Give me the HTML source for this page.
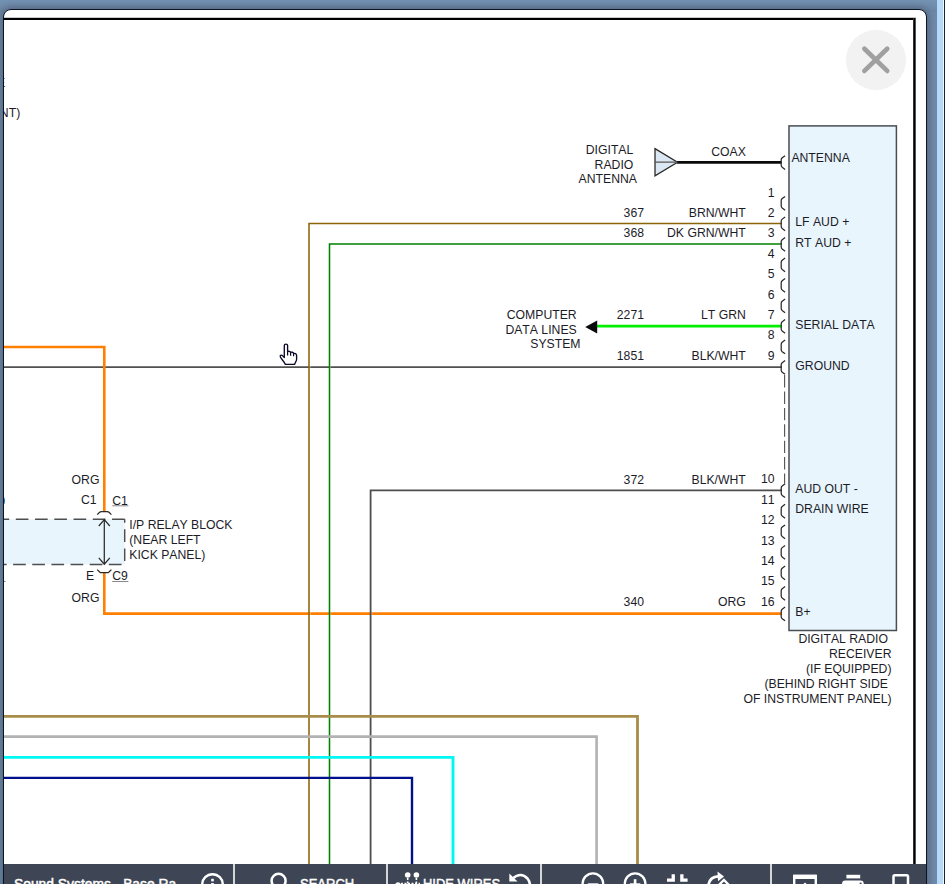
<!DOCTYPE html>
<html><head><meta charset="utf-8"><title>Wiring Diagram</title>
<style>
html,body{margin:0;padding:0;}
body{width:945px;height:884px;overflow:hidden;position:relative;background:#6f8ba9;font-family:"Liberation Sans",sans-serif;}
#bgtop{position:absolute;left:0;top:0;width:945px;height:12px;background:linear-gradient(#7493b4,#6b87a5);}
#panel{position:absolute;left:3px;top:9px;width:922px;height:900px;background:#fff;border:1px solid #0c1420;border-radius:8px 8px 0 0;box-shadow:0 0 7px 2px rgba(72,86,108,.7);}
#rstripe{position:absolute;left:937px;top:0;width:8px;height:884px;background:linear-gradient(90deg,#b1d9fd 0,#b9d8f5 3px,#aed8fb 6px,#eef7fe 6px,#eef7fe 7px,#1a2432 7px);}
#ftop{position:absolute;left:4px;top:17px;width:911.6px;height:3px;background:linear-gradient(#c8c8c8 0,#c8c8c8 1px,#000 1px);}
#fright{position:absolute;left:913px;top:18px;width:3px;height:846px;background:linear-gradient(90deg,#333 0,#333 1px,#000 1px,#000 2px,#555 2px);}
#dg{position:absolute;left:0;top:0;}
#close{position:absolute;left:846px;top:30px;width:60px;height:60px;border-radius:50%;background:#f2f2f2;}
#tb{position:absolute;left:4px;top:864px;width:922px;height:42px;background:#3e4656;color:#fff;}
.dv{position:absolute;top:0;width:2px;height:42px;background:#d3d8d6;}
.tt{position:absolute;white-space:nowrap;font-weight:normal;color:#fff;line-height:1;font-size:14px;transform-origin:0 0;-webkit-text-stroke:0.45px #fff;font-kerning:none;}
</style></head><body>
<div id="bgtop"></div>
<div id="panel"></div>
<div id="rstripe"></div>

<svg id="dg" width="945" height="884" viewBox="0 0 945 884">
<defs><clipPath id="cp"><rect x="4" y="20" width="909.3" height="844"/></clipPath></defs>
<g clip-path="url(#cp)" font-family="Liberation Sans, sans-serif" font-size="12.22" fill="#1c1c28" style="font-kerning:none">
<!-- component box -->
<rect x="789.0" y="125.9" width="107.4" height="504.6" fill="#e8f5fd" stroke="#484d52" stroke-width="1.5"/>
<!-- relay block -->
<rect x="-20" y="519.2" width="144.7" height="45.2" fill="#e8f5fd" stroke="none"/>
<path d="M124.7 519.2H-50" fill="none" stroke="#4e4e4e" stroke-width="1.45" stroke-dasharray="12.65 6.6"/>
<path d="M124.7 519.2V564.4H-50" fill="none" stroke="#4e4e4e" stroke-width="1.45" stroke-dasharray="12.7 6.45" stroke-dashoffset="9.1"/>
<!-- dashed link between pin9 and pin10 -->
<line x1="784.6" y1="375.1" x2="784.6" y2="483.4" stroke="#585858" stroke-width="1.15" stroke-dasharray="12.4 4"/>
<!-- vertical wires (below) -->
<g fill="none">
<path d="M104.3 572.8V613.6H782" stroke="#ff8000" stroke-width="2.6"/>
<path d="M0 367.1H782" stroke="#505050" stroke-width="1.7"/>
<path d="M0 347H104.3V511.4" stroke="#ff8000" stroke-width="2.6"/>
<path d="M310.15 365.9v2.4M330.55 365.9v2.4M310.2 612.0v3.2M330.6 612.0v3.2M371.8 612.0v3.2" stroke="#fff" stroke-width="0.4"/>
<path d="M782 223.5H309V890" stroke="#8b6508" stroke-width="1.55"/>
<path d="M782 244.0H329.5V890" stroke="#008000" stroke-width="1.55"/>
<path d="M782 490.4H370.6V890" stroke="#4e4e4e" stroke-width="1.8"/>
<path d="M0 716.3H637.5V890" stroke="#a88d4a" stroke-width="2.8"/>
<path d="M0 736.6H596.6V890" stroke="#b2b2b2" stroke-width="2.6"/>
<path d="M0 757.4H453V890" stroke="#00f8f4" stroke-width="2.9"/>
<path d="M0 777.9H412V890" stroke="#00108c" stroke-width="2.4"/>
<path d="M597 326.1H782" stroke="#00ee00" stroke-width="2.8"/>
<path d="M677 162.4H781.6" stroke="#0a0a0a" stroke-width="2.8"/>
</g>
<path d="M3.6 497.4Q5.4 500.6 3.8 504" fill="none" stroke="#2a7fd0" stroke-width="1.1"/><path d="M4 581.4H5.6" stroke="#888" stroke-width="1"/>
<!-- arrow -->
<path d="M585.2 326.9L597.2 320.4V333.4Z" fill="#0a0a0a"/>
<!-- antenna triangle -->
<path d="M655 148.6L677.5 162.2L655 175.8Z" fill="#dbe8f4" stroke="#2a2a2a" stroke-width="1.3" stroke-linejoin="miter"/>
<line x1="655" y1="162.2" x2="677" y2="162.2" stroke="#555" stroke-width="1.2"/>
<!-- connector arcs -->
<g fill="none" stroke="#2a2a2a" stroke-width="1.25" stroke-linecap="butt"><path d="M785.1 155.65 L782.2 157.85 Q781.2 158.65 781.2 159.85 L781.2 165.25 Q781.2 166.45 782.2 167.25 L785.1 169.45"/><path d="M785.1 196.40 L782.2 198.60 Q781.2 199.40 781.2 200.60 L781.2 206.00 Q781.2 207.20 782.2 208.00 L785.1 210.20"/><path d="M785.1 216.92 L782.2 219.12 Q781.2 219.92 781.2 221.12 L781.2 226.52 Q781.2 227.72 782.2 228.52 L785.1 230.72"/><path d="M785.1 237.44 L782.2 239.64 Q781.2 240.44 781.2 241.64 L781.2 247.04 Q781.2 248.24 782.2 249.04 L785.1 251.24"/><path d="M785.1 257.96 L782.2 260.16 Q781.2 260.96 781.2 262.16 L781.2 267.56 Q781.2 268.76 782.2 269.56 L785.1 271.76"/><path d="M785.1 278.48 L782.2 280.68 Q781.2 281.48 781.2 282.68 L781.2 288.08 Q781.2 289.28 782.2 290.08 L785.1 292.28"/><path d="M785.1 299.00 L782.2 301.20 Q781.2 302.00 781.2 303.20 L781.2 308.60 Q781.2 309.80 782.2 310.60 L785.1 312.80"/><path d="M785.1 319.52 L782.2 321.72 Q781.2 322.52 781.2 323.72 L781.2 329.12 Q781.2 330.32 782.2 331.12 L785.1 333.32"/><path d="M785.1 340.04 L782.2 342.24 Q781.2 343.04 781.2 344.24 L781.2 349.64 Q781.2 350.84 782.2 351.64 L785.1 353.84"/><path d="M785.1 360.56 L782.2 362.76 Q781.2 363.56 781.2 364.76 L781.2 370.16 Q781.2 371.36 782.2 372.16 L785.1 374.36"/><path d="M785.1 483.80 L782.2 486.00 Q781.2 486.80 781.2 488.00 L781.2 493.40 Q781.2 494.60 782.2 495.40 L785.1 497.60"/><path d="M785.1 504.34 L782.2 506.54 Q781.2 507.34 781.2 508.54 L781.2 513.94 Q781.2 515.14 782.2 515.94 L785.1 518.14"/><path d="M785.1 524.88 L782.2 527.08 Q781.2 527.88 781.2 529.08 L781.2 534.48 Q781.2 535.68 782.2 536.48 L785.1 538.68"/><path d="M785.1 545.42 L782.2 547.62 Q781.2 548.42 781.2 549.62 L781.2 555.02 Q781.2 556.22 782.2 557.02 L785.1 559.22"/><path d="M785.1 565.96 L782.2 568.16 Q781.2 568.96 781.2 570.16 L781.2 575.56 Q781.2 576.76 782.2 577.56 L785.1 579.76"/><path d="M785.1 586.50 L782.2 588.70 Q781.2 589.50 781.2 590.70 L781.2 596.10 Q781.2 597.30 782.2 598.10 L785.1 600.30"/><path d="M785.1 607.04 L782.2 609.24 Q781.2 610.04 781.2 611.24 L781.2 616.64 Q781.2 617.84 782.2 618.64 L785.1 620.84"/>
<path d="M97.2 514.6L99.6 512.2Q100.4 511.5 101.4 511.5H107.2Q108.2 511.5 109 512.2L111.4 514.6"/>
<path d="M97.2 569.6L99.6 572Q100.4 572.7 101.4 572.7H107.2Q108.2 572.7 109 572L111.4 569.6"/>
<path d="M104.3 519.6V564"/>
<path d="M98.8 526L104.3 519.6L109.8 526"/>
<path d="M98.8 557.8L104.3 564.2L109.8 557.8"/>
</g>
<!-- texts -->
<text x="774.6" y="196.5" text-anchor="end">1</text><text x="774.6" y="216.9" text-anchor="end">2</text><text x="774.6" y="237.3" text-anchor="end">3</text><text x="774.6" y="257.7" text-anchor="end">4</text><text x="774.6" y="278.1" text-anchor="end">5</text><text x="774.6" y="298.5" text-anchor="end">6</text><text x="774.6" y="318.9" text-anchor="end">7</text><text x="774.6" y="339.3" text-anchor="end">8</text><text x="774.6" y="359.7" text-anchor="end">9</text><text x="774.6" y="483.3" text-anchor="end">10</text><text x="774.6" y="503.7" text-anchor="end">11</text><text x="774.6" y="524.1" text-anchor="end">12</text><text x="774.6" y="544.6" text-anchor="end">13</text><text x="774.6" y="565.0" text-anchor="end">14</text><text x="774.6" y="585.4" text-anchor="end">15</text><text x="774.6" y="605.8" text-anchor="end">16</text>
<text x="20.2" y="117" text-anchor="end">NT)</text><text x="5.2" y="87" text-anchor="end">E</text>
<text x="633.3" y="154" text-anchor="end">DIGITAL</text>
<text x="633.3" y="168.7" text-anchor="end">RADIO</text>
<text x="637" y="183.4" text-anchor="end">ANTENNA</text>
<text x="745.8" y="156.2" text-anchor="end">COAX</text>
<text x="791.4" y="162.2">ANTENNA</text>
<text x="795.3" y="226.1">LF AUD +</text>
<text x="795.3" y="246.6">RT AUD +</text>
<text x="795.3" y="329.0">SERIAL DATA</text>
<text x="795.3" y="370.0">GROUND</text>
<text x="795.3" y="492.7">AUD OUT -</text>
<text x="795.3" y="513.1">DRAIN WIRE</text>
<text x="795.3" y="616.1">B+</text>
<g text-anchor="end">
<text x="644" y="217.0">367</text><text x="745.8" y="217.0">BRN/WHT</text>
<text x="644" y="237.4">368</text><text x="745.8" y="237.4">DK GRN/WHT</text>
<text x="644" y="319.0">2271</text><text x="745.8" y="319.0">LT GRN</text>
<text x="644" y="359.8">1851</text><text x="745.8" y="359.8">BLK/WHT</text>
<text x="644" y="483.5">372</text><text x="745.8" y="483.5">BLK/WHT</text>
<text x="644" y="605.9">340</text><text x="745.8" y="605.9">ORG</text>
<text x="576.7" y="319.2">COMPUTER</text>
<text x="576.7" y="333.8">DATA LINES</text>
<text x="580.5" y="348.4">SYSTEM</text>
<text x="888" y="643.2">DIGITAL RADIO</text>
<text x="891.5" y="658.05">RECEIVER</text>
<text x="891.5" y="672.9">(IF EQUIPPED)</text>
<text x="888" y="687.75">(BEHIND RIGHT SIDE</text>
<text x="891.5" y="702.6">OF INSTRUMENT PANEL)</text>
<text x="99.4" y="483.6">ORG</text>
<text x="96.6" y="503.8">C1</text>
<text x="94.2" y="579.6">E</text>
<text x="99.4" y="601.8">ORG</text>
</g>
<text x="112.2" y="504.8">C1</text><line x1="112.2" y1="505.8" x2="128.4" y2="505.8" stroke="#888" stroke-width="1"/>
<text x="112.2" y="580.3">C9</text><line x1="112.2" y1="581.5" x2="128.4" y2="581.5" stroke="#888" stroke-width="1"/>
<text x="129.3" y="528.8">I/P RELAY BLOCK</text>
<text x="129.3" y="543.7">(NEAR LEFT</text>
<text x="129.3" y="558.6">KICK PANEL)</text>
</g>
</svg>

<div id="ftop"></div><div id="fright"></div>
<div id="close"><svg width="60" height="60" viewBox="0 0 60 60"><path d="M18.4 18.7L41.2 40.9M41.2 18.7L18.4 40.9" stroke="#a0a0a0" stroke-width="4.7" stroke-linecap="round" fill="none"/></svg></div>
<svg id="cur" style="position:absolute;left:277.8px;top:341.9px" width="24" height="28" viewBox="0 0 24 28">
<path d="M6.3 3.4C6.3 1.7 9.6 1.7 9.6 3.4V9.6C10.4 8.9 12.4 9.2 12.6 10.4C13.5 9.8 15.4 10.2 15.6 11.5C16.6 11 18.6 11.6 18.6 13.2V17.2C18.6 19.2 17 20.6 16.6 22.4H7.4C6.2 19.6 3.6 17.4 2.4 15C1.6 13.6 3.2 12.5 4.4 13.6L6.3 15.6Z" fill="#fff" stroke="#0a0a28" stroke-width="1.35" stroke-linejoin="round"/>
<path d="M9.6 9.6V13.6M12.6 10.6V13.8M15.6 11.7V14.2" stroke="#0a0a28" stroke-width="1.25" fill="none"/>
</svg>
<div id="tb">
<div class="dv" style="left:228.8px"></div><div class="dv" style="left:382px"></div><div class="dv" style="left:536px"></div><div class="dv" style="left:766px"></div>
<div class="tt" id="t1" style="left:9.8px;top:12.5px;transform:scaleX(.988)">Sound Systems<span style="display:inline-block;width:12.4px"></span>Base Ra</div>
<div class="tt" id="t2" style="left:296px;top:12.5px;transform:scaleX(.928)">SEARCH</div>
<div class="tt" id="t3" style="left:419px;top:12.5px;transform:scaleX(.926)">HIDE WIRES</div>
<svg style="position:absolute;left:0;top:0" width="922" height="42" viewBox="4 864 922 42" fill="none" stroke="#fff">
<circle cx="212.5" cy="884.5" r="10.3" stroke-width="2.4"/><rect x="211.2" y="878.8" width="2.6" height="2.6" fill="#fff" stroke="none"/><rect x="211.2" y="883" width="2.6" height="7.5" fill="#fff" stroke="none"/>
<circle cx="278.6" cy="880.8" r="7" stroke-width="2.5"/>
<circle cx="407.7" cy="875" r="2.8" fill="#fff" stroke="none"/><circle cx="416.4" cy="875" r="2.8" fill="#fff" stroke="none"/><circle cx="398" cy="885" r="2.8" fill="#fff" stroke="none"/>
<path d="M407.7 878V884M416.4 878V884M401 883.5H420" stroke-width="1.6" stroke-dasharray="2 1.5"/>
<path d="M509 873.5V881.5H517.5" stroke="none" fill="none"/>
<path d="M509.3 873.6L509.3 881.6L517.5 881.6Z" fill="#fff" stroke="none"/>
<path d="M512.5 878.5Q521 871.5 527.5 878.5Q530 881.5 530 886" stroke-width="2.6"/>
<circle cx="592.9" cy="883.6" r="10.3" stroke-width="2.3"/><rect x="587.8" y="883.3" width="10.6" height="2.6" fill="#fff" stroke="none"/>
<circle cx="635.1" cy="883.6" r="10.3" stroke-width="2.3"/><rect x="629.8" y="883.3" width="10.6" height="2.6" fill="#fff" stroke="none"/><rect x="633.8" y="879.2" width="2.6" height="10.6" fill="#fff" stroke="none"/>
<path d="M671.6 874.2H674.9V881.7H667V878.4H671.6ZM680.2 874.2H683.5V878.4H687.6V881.7H680.2Z" fill="#fff" stroke="none"/>
<path d="M708.3 888Q708 877 718.5 876.4" stroke-width="2.7"/>
<path d="M717.5 871.6L724 876.5L718 881.2Z" fill="#fff" stroke="none"/>
<path d="M717.4 886.5L723.9 880L730.4 886.5" stroke-width="2.3"/>
<path d="M794.2 890V876H815.8V890" stroke-width="2.4"/><rect x="793" y="874.8" width="24" height="4.2" rx="1" fill="#fff" stroke="none"/><path d="M801 886L805 882.6L809 886Z" fill="#fff" stroke="none"/>
<rect x="846.4" y="874.8" width="13.8" height="3.6" fill="#fff" stroke="none"/><path d="M842 890V884Q842 880.6 845.4 880.6H860.4Q863.8 880.6 863.8 884V890Z" fill="#fff" stroke="none"/><circle cx="860.6" cy="883.6" r="1" fill="#3e4656" stroke="none"/>
<path d="M893.5 890V876.6Q893.5 875.3 894.8 875.3H906.7Q908 875.3 908 876.6V890" stroke-width="2.5"/>
</svg>
</div>
</body></html>
